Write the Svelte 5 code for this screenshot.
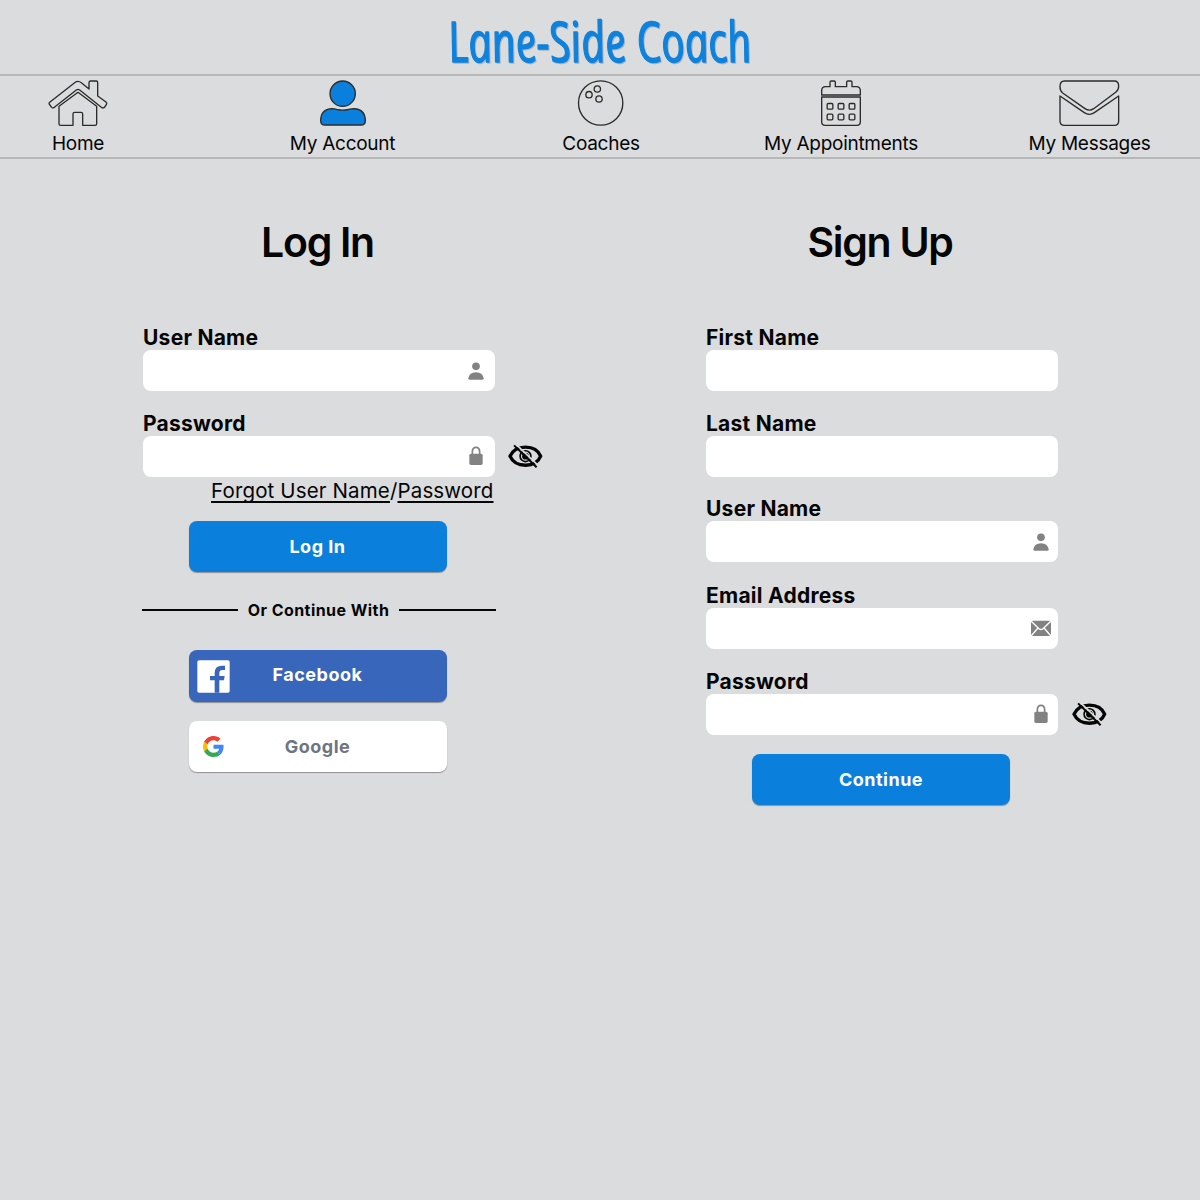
<script>
  const signup = [
    { label: 'First Name', icon: '' },
    { label: 'Last Name', icon: '' },
    { label: 'User Name', icon: 'user' },
    { label: 'Email Address', icon: 'mail' },
    { label: 'Password', icon: 'lock' }
  ];
  const login = [
    { label: 'User Name', icon: 'user' },
    { label: 'Password', icon: 'lock' }
  ];
</script>

{#snippet fieldIcon(kind)}
  {#if kind === 'user'}
    <svg class="glyph" viewBox="-30 -28 60 54" width="20" height="18">
      <circle cx="0" cy="-15" r="11.5" />
      <path d="M-23 21Q-20 3 0 3Q20 3 23 21Q23 25 19 25H-19Q-23 25 -23 21Z" />
    </svg>
  {:else if kind === 'lock'}
    <svg class="glyph" viewBox="-30 -29 60 60" width="20" height="20">
      <path class="shackle" d="M-11 0V-11Q-11 -25 0 -25Q11 -25 11 -11V0" />
      <rect x="-20" y="-6" width="40" height="34" rx="5" />
    </svg>
  {:else if kind === 'mail'}
    <svg class="glyph" viewBox="-30 -25 60 48" width="20" height="16">
      <rect x="-30" y="-23" width="60" height="46" rx="6" />
      <path class="fold" d="M-30 -22L-6 1Q0 6 6 1L30 -22M-29 22L-9 -1M29 22L9 -1" />
    </svg>
  {/if}
{/snippet}

{#snippet field(item)}
  <div class="field">
    <div class="label">{item.label}</div>
    <div class="row">
      <div class="input">{@render fieldIcon(item.icon)}</div>
      {#if item.icon === 'lock'}
        <svg class="eye" viewBox="1135 373 104 74" width="35" height="25">
          <path class="lid" d="M1141 409Q1153 382 1187 382Q1221 382 1232 409Q1221 436 1187 436Q1153 436 1141 409Z" />
          <circle class="iris" cx="1187" cy="409" r="16" />
          <circle cx="1187" cy="409" r="10" />
          <path class="gap" d="M1159 374L1226 438" />
          <path class="slash" d="M1153 377L1220 442" />
        </svg>
      {/if}
    </div>
  </div>
{/snippet}

<div class="page">
  <header>
    <svg class="brand" viewBox="0 0 400 74" width="400" height="74">
      <g transform="translate(51 61.5) skewX(10)">
        <text x="0" y="0" textLength="303" lengthAdjust="spacingAndGlyphs">Lane-Side Coach</text>
      </g>
    </svg>
  </header>

  <nav>
    <div class="item">
      <svg viewBox="145 28 180 138" width="60" height="46">
        <path d="M268 55V36q0-5 5-5H290q4 0 4 5V76L319 94q4 4 1 8l-5 7q-4 5-10 1L240 58q-5-4-10 0L164 110q-6 4-9-1l-5-7q-4-4 1-8L225 36q10-8 20 0Z" />
        <path d="M235 65L291 107V159q0 5-5 5H249V130q0-5-5-5H225q-5 0-5 5V164H183q-5 0-5-5V107Z" />
      </svg>
      <span>Home</span>
    </div>
    <div class="item">
      <svg viewBox="959 28 138 138" width="46" height="46">
        <circle class="on" cx="1027" cy="69" r="38" />
        <path class="on" d="M961 150q0-34 34-36q8 0 14 2q18 5 36 0q8-2 16-2q34 2 34 36q0 13-13 13H974q-13 0-13-13z" />
      </svg>
      <span>My Account</span>
    </div>
    <div class="item">
      <svg viewBox="114 28 138 138" width="46" height="46">
        <circle cx="182" cy="97" r="66.5" />
        <circle cx="172" cy="55" r="9.5" />
        <circle cx="147" cy="72" r="9.5" />
        <circle cx="177" cy="85" r="9.5" />
      </svg>
      <span>Coaches</span>
    </div>
    <div class="item">
      <svg viewBox="844 28 120 138" width="40" height="46">
        <path d="M846 73V60q0-10 10-12H871V35q0-4 4-4h8q4 0 4 4V48H921V35q0-4 4-4h8q4 0 4 4V48H952q10 2 10 12V73z" />
        <path d="M846 79H962V153q0 11-11 11H857q-11 0-11-11z" />
        {#each [107, 139] as y}
          {#each [871, 904, 937] as x}
            <rect x={x - 8.5} y={y - 8.5} width="17" height="17" rx="3" />
          {/each}
        {/each}
      </svg>
      <span>My Appointments</span>
    </div>
    <div class="item">
      <svg viewBox="179 28 180 138" width="60" height="46">
        <path d="M192 31H342q13 0 13 15q0 12-8 18L280 114q-13 9-26 0L187 67q-8-6-8-19q0-17 13-17z" />
        <path d="M179 76L252 126q15 10 30 0L355 76V151q0 13-13 13H192q-13 0-13-13z" />
      </svg>
      <span>My Messages</span>
    </div>
  </nav>

  <main>
    <section class="login">
      <h1>Log In</h1>
      {#each login as item}{@render field(item)}{/each}
      <div class="forgot"><u>Forgot User Name</u>/<u>Password</u></div>
      <div class="btn primary">Log In</div>
      <div class="or"><i></i><b>Or Continue With</b><i></i></div>
      <div class="btn facebook">
        <svg viewBox="200 450 99 97" width="33" height="33">
          <rect class="fbtile" x="201" y="450" width="97" height="97" rx="5" />
          <path class="fbmark" d="M253 547V510H239V497H253V488q0-22 22-22h9V479H276q-9 0-9 9V497H283L281 510H267V547z" />
        </svg>
        Facebook
      </div>
      <div class="btn google">
        <svg viewBox="0 0 48 48" width="21" height="21">
          <path fill="#EA4335" d="M24 9.5c3.54 0 6.71 1.22 9.21 3.6l6.85-6.85C35.9 2.38 30.47 0 24 0 14.62 0 6.51 5.38 2.56 13.22l7.98 6.19C12.43 13.72 17.74 9.5 24 9.5z" />
          <path fill="#4285F4" d="M46.98 24.55c0-1.57-.15-3.09-.38-4.55H24v9.02h12.94c-.58 2.96-2.26 5.48-4.78 7.18l7.73 6c4.51-4.18 7.09-10.36 7.09-17.65z" />
          <path fill="#FBBC05" d="M10.53 28.59c-.48-1.45-.76-2.99-.76-4.59s.27-3.14.76-4.59l-7.98-6.19C.92 16.46 0 20.12 0 24c0 3.88.92 7.54 2.56 10.78l7.97-6.19z" />
          <path fill="#34A853" d="M24 48c6.48 0 11.93-2.13 15.89-5.81l-7.73-6c-2.15 1.45-4.92 2.3-8.16 2.3-6.26 0-11.57-4.22-13.47-9.91l-7.98 6.19C6.51 42.62 14.62 48 24 48z" />
        </svg>
        Google
      </div>
    </section>

    <section class="signup">
      <h1>Sign Up</h1>
      {#each signup as item}{@render field(item)}{/each}
      <div class="btn primary">Continue</div>
    </section>
  </main>
</div>

<style>
  :global(body) { background: #dbdcdd; }
  .page {
    height: 1200px;
    overflow: hidden;
    background: #dbdcdd;
    color: #050505;
    font-family: Inter, "Liberation Sans", sans-serif;
  }
  header {
    height: 74px;
    display: flex;
    justify-content: center;
    border-bottom: 2px solid #b6b7b7;
  }
  .brand text {
    font: italic 400 56px "Open Sans", "Noto Sans", sans-serif;
    fill: #0e82dc;
    stroke: #0e82dc;
    stroke-width: 1.5;
    stroke-linejoin: round;
  }
  .brand { overflow: visible; filter: drop-shadow(1px 1px 0 #a5b4c0); }

  nav {
    height: 81px;
    display: grid;
    grid-template-columns: 156px 373px 144px 336px 161px;
    border-bottom: 2px solid #b6b7b7;
  }
  .item {
    display: flex;
    flex-direction: column;
    align-items: center;
    padding-top: 3.5px;
    font-size: 19px;
    line-height: 24px;
    letter-spacing: -0.27px;
    gap: 6px;
    white-space: nowrap;
  }
  .item svg { overflow: visible; fill: none; stroke: #2b2b2b; stroke-width: 4; stroke-linejoin: round; }
  .item .on { fill: #0a80dc; }

  main { display: flex; padding-top: 59px; }
  section { width: 352px; display: flex; flex-direction: column; }
  .login { margin-left: 142.5px; }
  .signup { margin-left: 211.5px; }
  h1 {
    margin: 0 2px 58px 0;
    font-size: 41px;
    line-height: 48px;
    height: 48px;
    font-weight: 600;
    letter-spacing: -1.3px;
    text-align: center;
  }
  .signup h1 { margin-right: 4px; }
  .field { height: 85.7px; flex: none; }
  .signup .field:nth-child(4) { height: 86.3px; }
  .signup .field:nth-child(5) { height: 86.3px; }
  .label {
    height: 26px;
    line-height: 27px;
    padding-left: 0.5px;
    font-size: 21px;
    font-weight: 700;
    letter-spacing: 0.25px;
  }
  .signup .label { padding-left: 0; }
  .row { display: flex; align-items: center; gap: 14px; margin-right: -60px; }
  .input {
    flex: none;
    width: 352px;
    height: 41px;
    box-sizing: border-box;
    border-radius: 8px;
    background: #fff;
    display: flex;
    align-items: center;
    justify-content: flex-end;
    padding-right: 9px;
  }
  .glyph { fill: #828282; }
  .signup .glyph { margin-right: -2px; }
  .shackle { fill: none; stroke: #828282; stroke-width: 5; }
  .fold { fill: none; stroke: #fff; stroke-width: 4; }
  .eye { margin-left: -1px; }
  .signup .eye { margin-left: 0; }
  .eye .lid { fill: none; stroke: #050505; stroke-width: 10; }
  .eye .iris { fill: none; stroke: #050505; stroke-width: 5; }
  .eye .gap { stroke: #dbdcdd; stroke-width: 5; }
  .eye .slash { stroke: #050505; stroke-width: 6; }

  .forgot {
    margin-top: -16.5px;
    height: 24px;
    line-height: 24px;
    text-align: right;
    font-size: 20.5px;
    letter-spacing: 0.14px;
    white-space: nowrap;
    padding-right: 1px;
  }
  .forgot u { text-underline-offset: 3px; text-decoration-thickness: 1.5px; text-decoration-skip-ink: none; }

  .btn {
    position: relative;
    flex: none;
    width: 258px;
    height: 51px;
    margin-left: 46px;
    border-radius: 8px;
    display: flex;
    align-items: center;
    justify-content: center;
    font-size: 18px;
    font-weight: 700;
    letter-spacing: 0.5px;
    color: #fff;
    box-shadow: 0 1px 1px rgba(0, 0, 0, 0.35);
  }
  .primary { background: #0a80dc; }
  .login .primary { margin-top: 18.5px; }
  .signup .primary { margin-top: 0; }
  .or {
    display: flex;
    align-items: center;
    gap: 10px;
    height: 24px;
    margin: 26px -1px 28px;
    font-size: 16px;
    letter-spacing: 0.45px;
    white-space: nowrap;
  }
  .or b { font-weight: 700; }
  .or i { flex: 1; height: 2px; background: #050505; }
  .btn svg { position: absolute; left: 8px; top: 10px; }
  .facebook { background: #3866bb; height: 52px; line-height: 22px; padding-bottom: 2px; box-sizing: border-box; }
  .fbtile { fill: #fff; }
  .fbmark { fill: #3866bb; }
  .google { background: #fff; color: #6d7584; margin-top: 19px; }
  .google svg { left: 14px; top: 15px; }
</style>
